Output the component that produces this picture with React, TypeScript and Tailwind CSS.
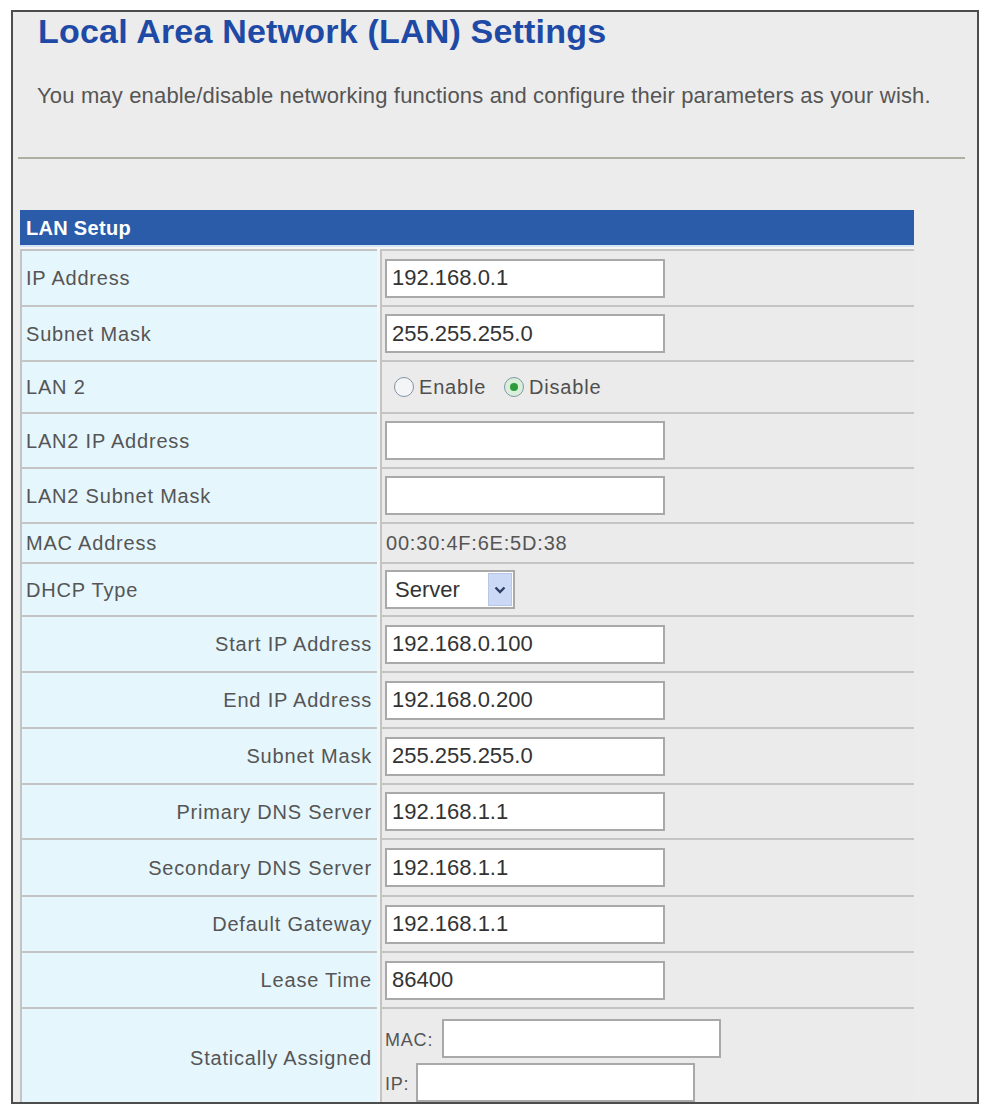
import React from 'react';

type Row =
  | { kind: 'input'; label: string; value: string; h: string; right?: boolean }
  | { kind: 'radio'; label: string; h: string }
  | { kind: 'text'; label: string; value: string; h: string }
  | { kind: 'select'; label: string; h: string }
  | { kind: 'static'; label: string; h: string };

const rows: Row[] = [
  { kind: 'input', label: 'IP Address', value: '192.168.0.1', h: 'h-[56px]' },
  { kind: 'input', label: 'Subnet Mask', value: '255.255.255.0', h: 'h-[55px]' },
  { kind: 'radio', label: 'LAN 2', h: 'h-[52px]' },
  { kind: 'input', label: 'LAN2 IP Address', value: '', h: 'h-[55px]' },
  { kind: 'input', label: 'LAN2 Subnet Mask', value: '', h: 'h-[55px]' },
  { kind: 'text', label: 'MAC Address', value: '00:30:4F:6E:5D:38', h: 'h-[40px]' },
  { kind: 'select', label: 'DHCP Type', h: 'h-[53px]' },
  { kind: 'input', label: 'Start IP Address', value: '192.168.0.100', h: 'h-[56px]', right: true },
  { kind: 'input', label: 'End IP Address', value: '192.168.0.200', h: 'h-[56px]', right: true },
  { kind: 'input', label: 'Subnet Mask', value: '255.255.255.0', h: 'h-[56px]', right: true },
  { kind: 'input', label: 'Primary DNS Server', value: '192.168.1.1', h: 'h-[55px]', right: true },
  { kind: 'input', label: 'Secondary DNS Server', value: '192.168.1.1', h: 'h-[57px]', right: true },
  { kind: 'input', label: 'Default Gateway', value: '192.168.1.1', h: 'h-[56px]', right: true },
  { kind: 'input', label: 'Lease Time', value: '86400', h: 'h-[56px]', right: true },
  { kind: 'static', label: 'Statically Assigned', h: 'h-[100px]' },
];

function TextBox({ value, w = 'w-[280px]' }: { value: string; w?: string }) {
  return (
    <input
      readOnly
      value={value}
      className={`${w} h-[39px] border-2 border-[#a9a9a9] bg-white pl-[5px] text-[22px] text-[#333] outline-none`}
    />
  );
}

function Radio({ checked }: { checked?: boolean }) {
  return (
    <span
      className={`flex h-[20px] w-[20px] items-center justify-center rounded-full border-[1.5px] ${
        checked ? 'border-[#7f99a8] bg-[#d9efd9]' : 'border-[#8593a3] bg-[#f3f5f7]'
      }`}
    >
      {checked && <span className="h-[8px] w-[8px] rounded-full bg-[#2e9c3c]" />}
    </span>
  );
}

function Cell({ row }: { row: Row }) {
  switch (row.kind) {
    case 'input':
      return <TextBox value={row.value} />;
    case 'radio':
      return (
        <div className="flex items-center pl-[9px] text-[20px] tracking-[0.8px] text-[#4f4f4f]">
          <Radio />
          <span className="ml-[5px]">Enable</span>
          <span className="ml-[18px]">
            <Radio checked />
          </span>
          <span className="ml-[5px]">Disable</span>
        </div>
      );
    case 'text':
      return <span className="pl-[1px] text-[20px] tracking-[0.8px] text-[#555]">{row.value}</span>;
    case 'select':
      return (
        <div className="flex h-[39px] w-[130px] items-center border-2 border-[#a9a9a9] bg-white">
          <span className="flex-1 pl-[8px] text-[22px] text-[#333]">Server</span>
          <span className="mr-[1px] flex h-[33px] w-[24px] items-center justify-center border border-[#b9c7e6] bg-[#cbd9f6]">
            <svg width="12" height="8" viewBox="0 0 12 8">
              <path d="M1.5 1.5 L6 6 L10.5 1.5" fill="none" stroke="#2d3d66" strokeWidth="2.4" />
            </svg>
          </span>
        </div>
      );
    case 'static':
      return (
        <div className="flex flex-col pt-[5px]">
          <div className="flex items-end">
            <span className="mb-[4px] w-[57px] text-[18px] tracking-[0.8px] text-[#555]">MAC:</span>
            <TextBox value="" w="w-[279px]" />
          </div>
          <div className="mt-[5px] flex items-end">
            <span className="mb-[4px] w-[31px] text-[18px] tracking-[0.8px] text-[#555]">IP:</span>
            <TextBox value="" w="w-[279px]" />
          </div>
        </div>
      );
  }
}

export default function App() {
  return (
    <div className="min-h-[1107px] bg-white font-['Liberation_Sans',Arial,sans-serif]">
      <div className="ml-[11px] pt-[10px]">
        <div className="h-[1094px] w-[968px] overflow-hidden border-2 border-[#4d4d4d] bg-[#ececec]">
          <h1 className="pl-[25px] pt-[2px] text-[34px] font-bold leading-[34px] tracking-[0.2px] text-[#1e4aa6]">
            Local Area Network (LAN) Settings
          </h1>
          <p className="mt-[37px] pl-[24px] text-[22px] leading-[22px] tracking-[0.16px] text-[#555]">
            You may enable/disable networking functions and configure their parameters as your wish.
          </p>
          <div className="ml-[5px] mt-[50px] h-[2px] w-[947px] bg-[#b0b0a2]" />
          <div className="ml-[7px] mt-[51px] w-[894px]">
            <div className="flex h-[35px] items-center bg-[#2b5ca9] pl-[6px] text-[20px] font-bold tracking-[0.3px] text-white">
              LAN Setup
            </div>
            <div className="h-[2px] bg-[#d3e3f3]" />
            <div className="bg-[#f5f5f5] pt-[2px]">
              {rows.map((row, i) => (
                <div key={i} className={`flex gap-[3px] ${row.h}`}>
                  <div
                    className={`flex w-[357px] items-center border-l-2 border-t-2 border-[#c4c4c4] bg-[#e5f6fd] text-[20px] tracking-[0.8px] text-[#555] ${
                      (row.kind === 'input' && row.right) || row.kind === 'static'
                        ? 'justify-end pr-[5px]'
                        : 'pl-[4px]'
                    }`}
                  >
                    {row.label}
                  </div>
                  <div className="flex flex-1 items-center border-l-2 border-t-2 border-[#c4c4c4] bg-[#ebebeb] pl-[3px]">
                    <Cell row={row} />
                  </div>
                </div>
              ))}
            </div>
          </div>
        </div>
      </div>
    </div>
  );
}
